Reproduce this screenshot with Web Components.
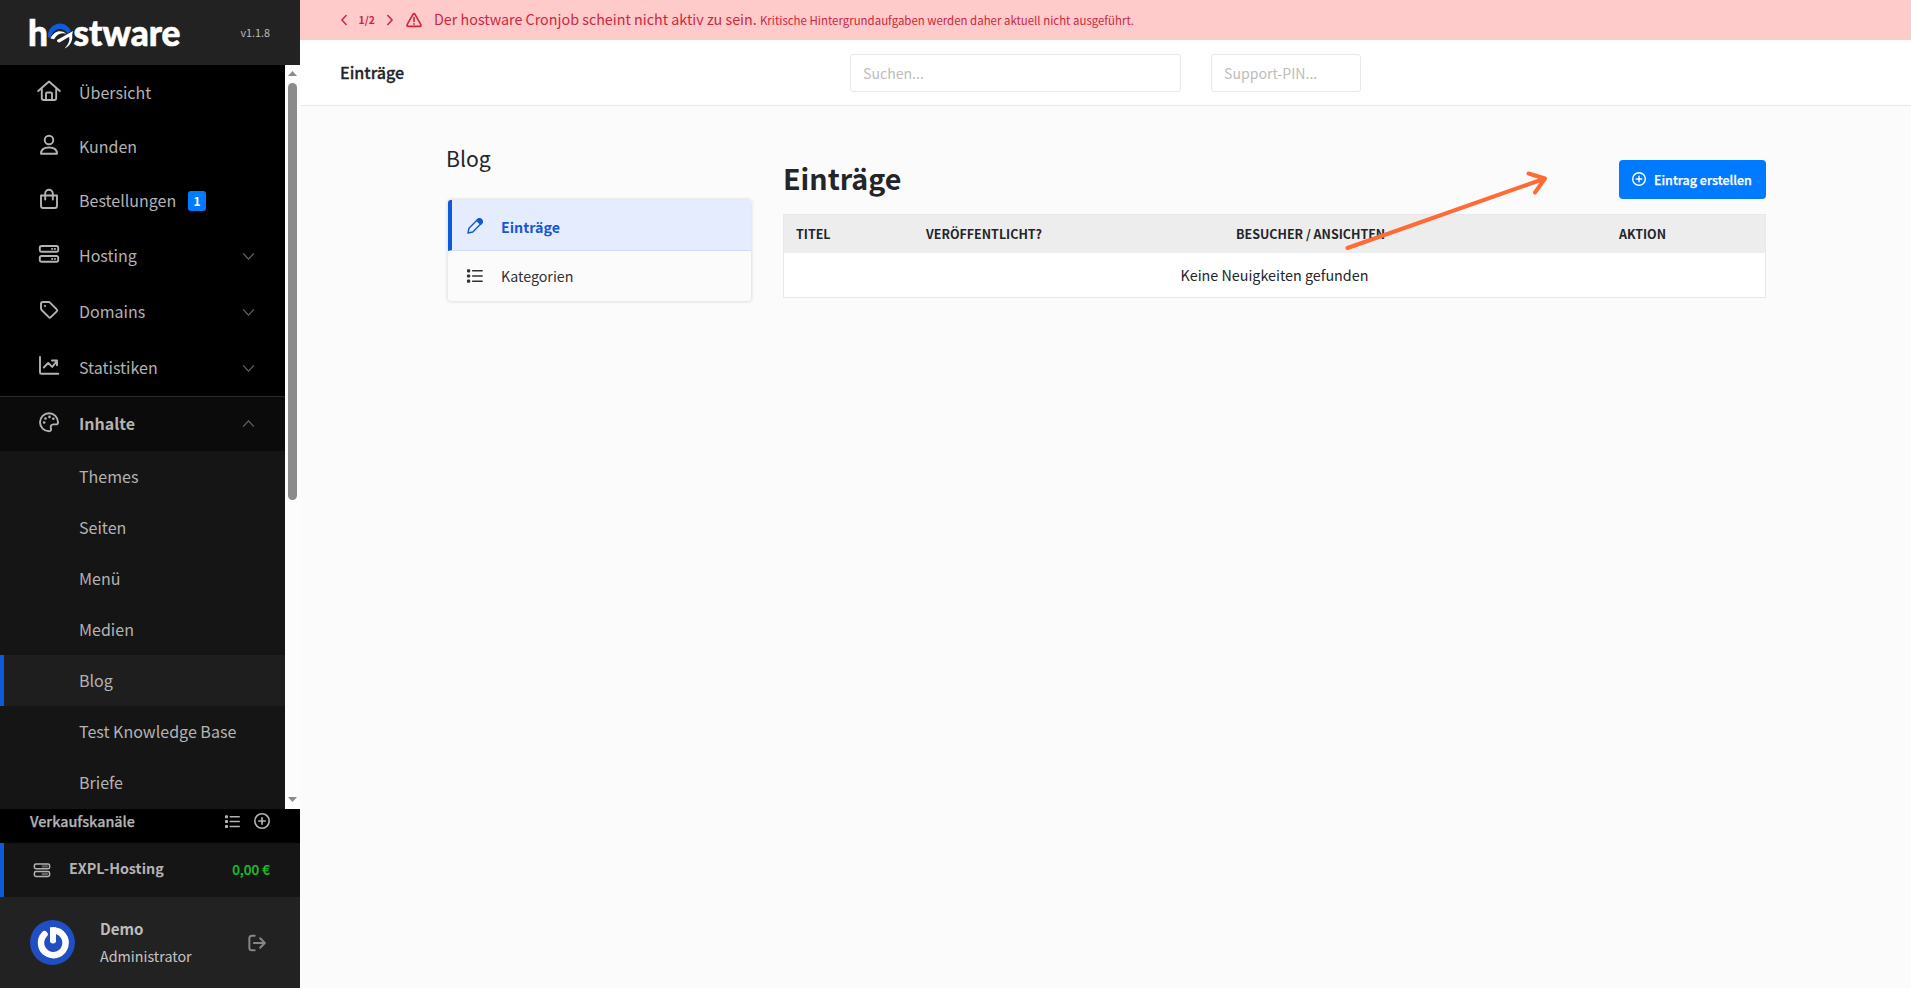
<!DOCTYPE html>
<html lang="de">
<head>
<meta charset="utf-8">
<title>Einträge</title>
<style>
    body{
        margin: 0;
        height: 100vh;
        overflow: hidden;
        background: #fbfbfb;
        color: #222529;
        font-family: "Noto Sans CJK SC", "Noto Sans", sans-serif;
        font-size: 14.32px;
        line-height: 20px;
    }
</style>
</head>
<body>
<app-shell></app-shell>

<script>
const icons = {
    home: '<path d="M-.8 10 10 .5 20.800 10M2.800 7.500v9.500q0 2 2 2h10.400q2 0 2-2V7.500M7 18.500v-5.700q0-1.300 1.300-1.300h3.400q1.300 0 1.300 1.300v5.700"/>',
    user: '<circle cx="10" cy="5" r="4.300"/><path d="M2 18.800c0-4.200 2.600-6.300 8-6.300s8 2.100 8 6.300z"/>',
    bag: '<path d="M2 6.500h16v10.200q0 2.300-2.300 2.300H4.300Q2 19 2 16.700zM6.200 10.500V4.500a3.800 3.800 0 0 1 7.600 0v6"/>',
    server: '<rect x=".8" y="2" width="18.400" height="5.800" rx="1.800"/><rect x=".8" y="12" width="18.400" height="5.800" rx="1.800"/><path d="M13 4.900h.3M15.800 4.900h.3M13 14.900h.3M15.800 14.900h.3"/>',
    serverSmall: '<rect x=".5" y="2.500" width="19" height="6" rx="2"/><rect x=".5" y="12" width="19" height="6" rx="2"/><path stroke-width="3" opacity=".5" d="M11 5.500h5M11 15h5"/>',
    tag: '<path d="M2 4q0-2 2-2h5.600q.8 0 1.400.6l6.700 6.700q1 1 0 2l-5.900 5.900q-1 1-2 0l-7.200-7.200q-.6-.6-.6-1.400z"/><circle cx="6" cy="6" r="1.100" fill="currentColor" stroke="none"/>',
    chart: '<path d="M1 1v15.500q0 1.300 1.300 1.300h17M4.800 11.500l4.400-4.600 4 4 4.700-5.700M13 4.500h5v4.700"/>',
    palette: '<path d="M19 10.200A9 9 0 1 0 10 19.200c2 0 2.400-1.300 1.900-2.800-.7-2.400.3-4 2.500-4h2.800q1.800 0 1.800-2.200z"/><g fill="currentColor" stroke="none"><circle cx="5.200" cy="10.500" r="1.300"/><circle cx="6.500" cy="6.500" r="1.300"/><circle cx="10.500" cy="4.900" r="1.300"/><circle cx="14.300" cy="6.800" r="1.300"/></g>',
    down: '<path d="m3.500 6.500 6.500 7 6.500-7"/>',
    up: '<path d="m3.500 13.500 6.500-7 6.500 7"/>',
    left: '<path d="m13.500 2.500-7 7.500 7 7.500"/>',
    right: '<path d="m6.500 2.500 7 7.500-7 7.500"/>',
    warning: '<path d="M8.800 2.800 1.400 15.700Q.7 17.800 2.600 18h14.800q1.900-.2 1.200-2.300L11.200 2.800q-1.200-1.600-2.400 0zM10 7v5M10 14.800v.4"/>',
    list: '<path d="M7 3.500h12M7 10h12M7 16.500h12"/><g fill="currentColor" stroke="none"><rect x="0" y="1.500" width="4" height="4" rx="1"/><rect x="0" y="8" width="4" height="4" rx="1"/><rect x="0" y="14.500" width="4" height="4" rx="1"/></g>',
    plus: '<circle cx="10" cy="10" r="9"/><path d="M10 6v8M6 10h8"/>',
    pencil: '<path d="m1.200 18.800 1.300-6L13.400 2q1.800-1.800 3.600 0l1 1q1.800 1.800 0 3.600L7.200 17.500z"/><path fill="currentColor" d="m12.200 3.200 2-1.900h3l1.700 1.900v2.500l-1.800 2.100z"/>',
    logout: '<path d="M7.500 2H4.300Q1.500 2 1.500 4.800v10.400Q1.500 18 4.300 18h3.200M6.500 10h12M13.500 4.700l5.200 5.300-5.200 5.300"/>'
};

// Icon on a 20x20 grid, takes name, size and stroke
class UiIcon extends HTMLElement{
    constructor(){
        super();
        this.attachShadow({mode:'open'});
    }

    connectedCallback(){
        const size = this.getAttribute('size') || 20;
        const stroke = this.getAttribute('stroke') || 1.6;
        this.shadowRoot.innerHTML = `
        <style>
        :host{
            display: block;
            flex: none;
            width: ${size}px;
            height: ${size}px;
        }

        svg{
            display: block;
            overflow: visible;
        }
        </style>
        <svg width="${size}" height="${size}" viewBox="0 0 20 20" fill="none" stroke="currentColor" stroke-width="${stroke}" stroke-linecap="round" stroke-linejoin="round">${icons[this.getAttribute('name')]}</svg>
        `;
    }
}

// Brand logo with version
class BrandBar extends HTMLElement{
    constructor(){
        super();
        this.attachShadow({mode:'open'});
        this.shadowRoot.innerHTML = `
        <style>
        :host{
            display: flex;
            flex: none;
            justify-content: space-between;
            align-items: center;
            height: 65px;
            padding: 0 30px 0 26px;
            box-sizing: border-box;
            background: #222;
            color: #bcbcbc;
            font-size: 10.8px;
        }

        svg{
            display: block;
        }

        text{
            font-family: Lato, sans-serif;
            font-weight: 900;
            font-size: 36px;
            fill: #fff;
            stroke: #fff;
            stroke-width: .6px;
        }

        span{
            padding-bottom: 2px;
        }
        </style>
        <svg width="160" height="59" viewBox="-4 -13 160 59">
            <text x="-2" y="30" textLength="20" lengthAdjust="spacingAndGlyphs">h</text>
            <path fill="#0f5bdc" d="M18 21A12 12 0 0 1 41 15l-3.500 2.200C33 10.500 23 11.500 20.600 22z"/>
            <path fill="#fff" d="M20.500 22.500c3-7 10-9.500 16-4.700-5.500-1.600-9.500.2-12.500 5.500z"/>
            <path fill="#fff" d="M27 24 43 15l-.8 3.500C43 25 40 30 34.500 32.500c4-4 5.500-8 4.700-11.800L29.500 26.500q-2.500 0-2.500-2.500z"/>
            <text x="43.500" y="30" textLength="107" lengthAdjust="spacingAndGlyphs">stware</text>
        </svg>
        <span><slot></slot></span>
        `;
    }
}

// Main navigation row
class NavItem extends HTMLElement{
    constructor(){
        super();
        this.attachShadow({mode:'open'});
    }

    connectedCallback(){
        const arrow = this.getAttribute('arrow');
        this.shadowRoot.innerHTML = `
        <style>
        :host{
            display: flex;
            flex: none;
            align-items: center;
            box-sizing: border-box;
            height: 54.3px;
            padding: 0 29px 1px 39px;
            color: #b3b3b3;
            font-size: 16px;
        }

        :host([icon="home"]){
            padding-bottom: 0;
        }

        :host([arrow]){
            height: 55.9px;
            padding-bottom: 1px;
        }

        :host([arrow="up"]){
            height: 55px;
            border-top: 1px solid #2b2b2b;
            background: #0b0b0b;
            font-weight: 700;
        }

        .icon{
            margin-bottom: 2px;
        }

        .label{
            display: flex;
            align-items: center;
            flex: 1;
            margin-left: 20px;
        }

        .arrow{
            margin-top: 3px;
            color: #5e5e5e;
        }

        :host([arrow="up"]) .arrow{
            margin-top: 0;
        }
        </style>
        <ui-icon class="icon" name="${this.getAttribute('icon')}" size="20" stroke="1.900"></ui-icon>
        <span class="label"><slot></slot></span>
        ${arrow ? `<ui-icon class="arrow" name="${arrow}" size="15" stroke="1.900"></ui-icon>` : ''}
        `;
    }
}

class NavBadge extends HTMLElement{
    constructor(){
        super();
        this.attachShadow({mode:'open'});
        this.shadowRoot.innerHTML = `
        <style>
        :host{
            display: block;
            width: 18px;
            height: 20px;
            margin: 2px 0 0 12px;
            border-radius: 3px;
            background: #007aff;
            color: #fff;
            font-size: 12px;
            font-weight: 700;
            line-height: 19px;
            text-align: center;
        }
        </style>
        <slot></slot>
        `;
    }
}

class SubItem extends HTMLElement{
    constructor(){
        super();
        this.attachShadow({mode:'open'});
        this.shadowRoot.innerHTML = `
        <style>
        :host{
            display: flex;
            flex: none;
            align-items: center;
            box-sizing: border-box;
            height: 51px;
            padding-left: 75px;
            border-left: 4px solid transparent;
            color: #b3b3b3;
            font-size: 16.050px;
        }

        :host([active]){
            border-left-color: #0d5bdb;
            background: #1e1e1e;
        }
        </style>
        <slot></slot>
        `;
    }
}

class NavScroll extends HTMLElement{
    constructor(){
        super();
        this.attachShadow({mode:'open'});
        this.shadowRoot.innerHTML = `
        <style>
        :host{
            display: flex;
            flex: 1;
            min-height: 0;
        }

        .menu{
            display: flex;
            flex-direction: column;
            flex: 1;
            overflow: hidden;
            background: #000;
        }

        .sub{
            display: flex;
            flex-direction: column;
            flex: 1;
            background: #151515;
        }

        .bar{
            display: flex;
            flex-direction: column;
            align-items: center;
            width: 15px;
            background: #fcfcfc;
            box-sizing: border-box;
            padding: 6px 0 7px;
        }

        .thumb{
            width: 9px;
            height: 417px;
            margin: 7px 0 auto;
            border-radius: 5px;
            background: #8b8b8b;
        }

        svg{
            display: block;
            fill: #8b8b8b;
        }
        </style>
        <div class="menu">
            <slot></slot>
            <div class="sub"><slot name="sub"></slot></div>
        </div>
        <div class="bar">
            <svg width="9" height="5"><path d="M0 5 4.500 0 9 5z"/></svg>
            <div class="thumb"></div>
            <svg width="9" height="5"><path d="M0 0 4.500 5 9 0z"/></svg>
        </div>
        `;
    }
}

class SalesChannels extends HTMLElement{
    constructor(){
        super();
        this.attachShadow({mode:'open'});
        this.shadowRoot.innerHTML = `
        <style>
        :host{
            display: block;
            flex: none;
            color: #b3b3b3;
        }

        .head, .channel{
            display: flex;
            align-items: center;
            box-sizing: border-box;
            padding-right: 30px;
        }

        .head{
            height: 34px;
            padding: 0 30px 10px;
            gap: 14px;
            background: #000;
            font-weight: 500;
            -webkit-text-stroke: .25px;
        }

        .head span{
            flex: 1;
        }

        .channel{
            height: 54px;
            border-left: 4px solid #0d5bdb;
            padding-left: 30px;
            background: #151515;
        }

        .name{
            flex: 1;
            margin: 0 0 5px 19px;
            font-weight: 700;
        }

        .amount{
            color: #1fbc2c;
            font-size: 13.500px;
            font-weight: 500;
            -webkit-text-stroke: .25px;
            padding-bottom: 2px;
        }
        </style>
        <div class="head">
            <span>Verkaufskanäle</span>
            <ui-icon name="list" size="15" stroke="2"></ui-icon>
            <ui-icon name="plus" size="16" stroke="2"></ui-icon>
        </div>
        <div class="channel">
            <ui-icon name="serverSmall" size="16" stroke="1.900"></ui-icon>
            <span class="name">EXPL-Hosting</span>
            <span class="amount">0,00 €</span>
        </div>
        `;
    }
}

class UserPanel extends HTMLElement{
    constructor(){
        super();
        this.attachShadow({mode:'open'});
        this.shadowRoot.innerHTML = `
        <style>
        :host{
            display: flex;
            flex: none;
            align-items: center;
            box-sizing: border-box;
            height: 91px;
            padding: 0 34px 0 30px;
            background: #222;
            color: #c4c4c4;
        }

        .text{
            flex: 1;
            margin: 0 0 1px 25px;
            line-height: 28px;
        }

        b{
            display: block;
            color: #bcbcbc;
            font-size: 15.100px;
        }

        ui-icon{
            color: #868686;
        }
        </style>
        <svg width="45" height="45" viewBox="0 0 45 45">
            <circle cx="22.500" cy="22.500" r="22.500" fill="#204ec5"/>
            <path d="M14.500 14.200a12.300 12.300 0 1 0 9-3.700" fill="none" stroke="#fff" stroke-width="6.500" stroke-linecap="round"/>
            <path d="M20 7.300h6V22q-3 3-6 0z" fill="#fff"/>
        </svg>
        <div class="text"><b>Demo</b>Administrator</div>
        <ui-icon name="logout" size="18" stroke="2.200"></ui-icon>
        `;
    }
}

class AlertBar extends HTMLElement{
    constructor(){
        super();
        this.attachShadow({mode:'open'});
        this.shadowRoot.innerHTML = `
        <style>
        :host{
            display: flex;
            flex: none;
            align-items: center;
            box-sizing: border-box;
            height: 40px;
            padding: 0 0 1px 38px;
            background: #ffcaca;
            color: #cb2740;
        }

        .count{
            width: 17px;
            margin: 0 8px 0 8.500px;
            font-size: 10.400px;
            font-weight: 700;
            white-space: nowrap;
        }

        .warn{
            margin: 0 12px 0 10.500px;
        }

        small{
            font-size: 11.460px;
        }
        </style>
        <ui-icon name="left" size="12" stroke="2.600"></ui-icon>
        <span class="count">1/2</span>
        <ui-icon name="right" size="12" stroke="2.600"></ui-icon>
        <ui-icon class="warn" name="warning" size="16" stroke="2"></ui-icon>
        <span>Der hostware Cronjob scheint nicht aktiv zu sein. <small>Kritische Hintergrundaufgaben werden daher aktuell nicht ausgeführt.</small></span>
        `;
    }
}

class TopBar extends HTMLElement{
    constructor(){
        super();
        this.attachShadow({mode:'open'});
        this.shadowRoot.innerHTML = `
        <style>
        :host{
            display: flex;
            flex: none;
            align-items: center;
            box-sizing: border-box;
            height: 66px;
            padding-left: 40px;
            gap: 30px;
            border-bottom: 1px solid #e9e9e9;
            background: #fff;
        }

        .title{
            width: 480px;
            padding-bottom: 2px;
            font-size: 16.100px;
            font-weight: 500;
            -webkit-text-stroke: .3px;
        }

        .field{
            box-sizing: border-box;
            height: 38px;
            padding: 8px 12px;
            border: 1px solid #e9e9e9;
            border-radius: 3px;
            color: #bdbdbd;
            font-size: 14.100px;
        }

        .search{
            width: 331px;
        }

        .pin{
            width: 150px;
        }
        </style>
        <div class="title"><slot></slot></div>
        <div class="field search">Suchen...</div>
        <div class="field pin">Support-PIN...</div>
        `;
    }
}

// Entry of the card menu on the left
class CardLink extends HTMLElement{
    constructor(){
        super();
        this.attachShadow({mode:'open'});
    }

    connectedCallback(){
        this.shadowRoot.innerHTML = `
        <style>
        :host{
            display: flex;
            align-items: center;
            box-sizing: border-box;
            height: 50px;
            padding-left: 19px;
            gap: 18px;
            font-size: 14.250px;
            color: #303236;
        }

        :host([active]){
            height: 51px;
            padding-left: 15px;
            border-left: 4px solid #0d5bdb;
            border-bottom: 1px solid #cfdcf3;
            background: #e4ecfe;
            color: #1558d0;
            font-weight: 700;
        }

        :host([active]) span{
            margin-top: 3px;
        }

        :host([active]) ui-icon{
            margin-top: 1px;
        }
        </style>
        <ui-icon name="${this.getAttribute('icon')}" size="16" stroke="1.800"></ui-icon>
        <span><slot></slot></span>
        `;
    }
}

class SideCard extends HTMLElement{
    constructor(){
        super();
        this.attachShadow({mode:'open'});
        this.shadowRoot.innerHTML = `
        <style>
        :host{
            display: block;
            width: 306px;
        }

        h2{
            margin: -1px 0 26px;
            font-size: 21.200px;
            font-weight: 400;
            line-height: 30px;
        }

        .card{
            overflow: hidden;
            margin-left: 1px;
            border: 1px solid #e9e9e9;
            border-radius: 4px;
            box-shadow: 0 0 2px 1px #ececec;
        }
        </style>
        <h2>Blog</h2>
        <div class="card"><slot></slot></div>
        `;
    }
}

class PrimaryButton extends HTMLElement{
    constructor(){
        super();
        this.attachShadow({mode:'open'});
        this.shadowRoot.innerHTML = `
        <style>
        .btn{
            display: flex;
            align-items: center;
            height: 39px;
            padding: 0 0 1px 13px;
            width: 147px;
            gap: 8px;
            border: 0;
            border-radius: 4px;
            background: #007aff;
            color: #fff;
            font-family: inherit;
            font-size: 12.500px;
            font-weight: 500;
            -webkit-text-stroke: .25px;
            white-space: nowrap;
        }
        </style>
        <button class="btn"><ui-icon name="plus" size="14" stroke="2"></ui-icon><slot></slot></button>
        `;
    }
}

class EntryTable extends HTMLElement{
    constructor(){
        super();
        this.attachShadow({mode:'open'});
        this.shadowRoot.innerHTML = `
        <style>
        :host{
            display: block;
            box-sizing: border-box;
            border: 1px solid #e8e8e8;
            background: #fff;
        }

        .head{
            display: grid;
            grid-template-columns: 130px 310px 383px 1fr;
            align-items: center;
            height: 38px;
            padding-left: 12px;
            background: #ededed;
            font-size: 12.480px;
            font-weight: 700;
        }

        .head span{
            margin-bottom: 1px;
        }

        .empty{
            height: 44px;
            line-height: 44px;
            text-align: center;
        }
        </style>
        <div class="head"><span>TITEL</span><span>VERÖFFENTLICHT?</span><span>BESUCHER / ANSICHTEN</span><span>AKTION</span></div>
        <div class="empty"><slot></slot></div>
        `;
    }
}

// Orange arrow lying over the table and the heading
class HintArrow extends HTMLElement{
    constructor(){
        super();
        this.attachShadow({mode:'open'});
        this.shadowRoot.innerHTML = `
        <style>
        :host{
            position: absolute;
            left: 1340px;
            top: 165px;
        }

        svg{
            display: block;
        }
        </style>
        <svg width="212" height="90" fill="none" stroke="#ff6b35" stroke-width="4" stroke-linecap="round" stroke-linejoin="round">
            <path d="M7.500 83 205 13.500M188.500 8.500 205 13.500 195 27.500"/>
        </svg>
        `;
    }
}

class AppShell extends HTMLElement{
    constructor(){
        super();
        this.attachShadow({mode:'open'});
        this.render();
    }

    render(){
        this.shadowRoot.innerHTML = `
        <style>
        :host{
            display: flex;
            height: 100vh;
        }

        aside{
            display: flex;
            flex-direction: column;
            flex: none;
            width: 300px;
        }

        main{
            display: flex;
            flex-direction: column;
            flex: 1;
        }

        .content{
            display: flex;
            gap: 31px;
            padding: 38px 145px 0 146px;
        }

        .entries{
            flex: 1;
            padding-top: 16px;
        }

        .title{
            display: flex;
            justify-content: space-between;
            align-items: center;
            margin-bottom: 15px;
        }

        h1{
            margin: 0;
            font-size: 28.650px;
            line-height: 36px;
            padding-bottom: 3px;
        }
        </style>
        <aside>
            <brand-bar>v1.1.8</brand-bar>
            <nav-scroll>
                <nav-item icon="home">Übersicht</nav-item>
                <nav-item icon="user">Kunden</nav-item>
                <nav-item icon="bag">Bestellungen <nav-badge>1</nav-badge></nav-item>
                <nav-item icon="server" arrow="down">Hosting</nav-item>
                <nav-item icon="tag" arrow="down">Domains</nav-item>
                <nav-item icon="chart" arrow="down">Statistiken</nav-item>
                <nav-item icon="palette" arrow="up">Inhalte</nav-item>
                <sub-item slot="sub">Themes</sub-item>
                <sub-item slot="sub">Seiten</sub-item>
                <sub-item slot="sub">Menü</sub-item>
                <sub-item slot="sub">Medien</sub-item>
                <sub-item slot="sub" active>Blog</sub-item>
                <sub-item slot="sub">Test Knowledge Base</sub-item>
                <sub-item slot="sub">Briefe</sub-item>
            </nav-scroll>
            <sales-channels></sales-channels>
            <user-panel></user-panel>
        </aside>
        <main>
            <alert-bar></alert-bar>
            <top-bar>Einträge</top-bar>
            <div class="content">
                <side-card>
                    <card-link icon="pencil" active>Einträge</card-link>
                    <card-link icon="list">Kategorien</card-link>
                </side-card>
                <div class="entries">
                    <div class="title"><h1>Einträge</h1><primary-button>Eintrag erstellen</primary-button></div>
                    <entry-table>Keine Neuigkeiten gefunden</entry-table>
                </div>
            </div>
        </main>
        <hint-arrow></hint-arrow>
        `;
    }
}

customElements.define("ui-icon", UiIcon);
customElements.define("brand-bar", BrandBar);
customElements.define("nav-item", NavItem);
customElements.define("nav-badge", NavBadge);
customElements.define("sub-item", SubItem);
customElements.define("nav-scroll", NavScroll);
customElements.define("sales-channels", SalesChannels);
customElements.define("user-panel", UserPanel);
customElements.define("alert-bar", AlertBar);
customElements.define("top-bar", TopBar);
customElements.define("card-link", CardLink);
customElements.define("side-card", SideCard);
customElements.define("primary-button", PrimaryButton);
customElements.define("entry-table", EntryTable);
customElements.define("hint-arrow", HintArrow);
customElements.define("app-shell", AppShell);
</script>
</body>
</html>
